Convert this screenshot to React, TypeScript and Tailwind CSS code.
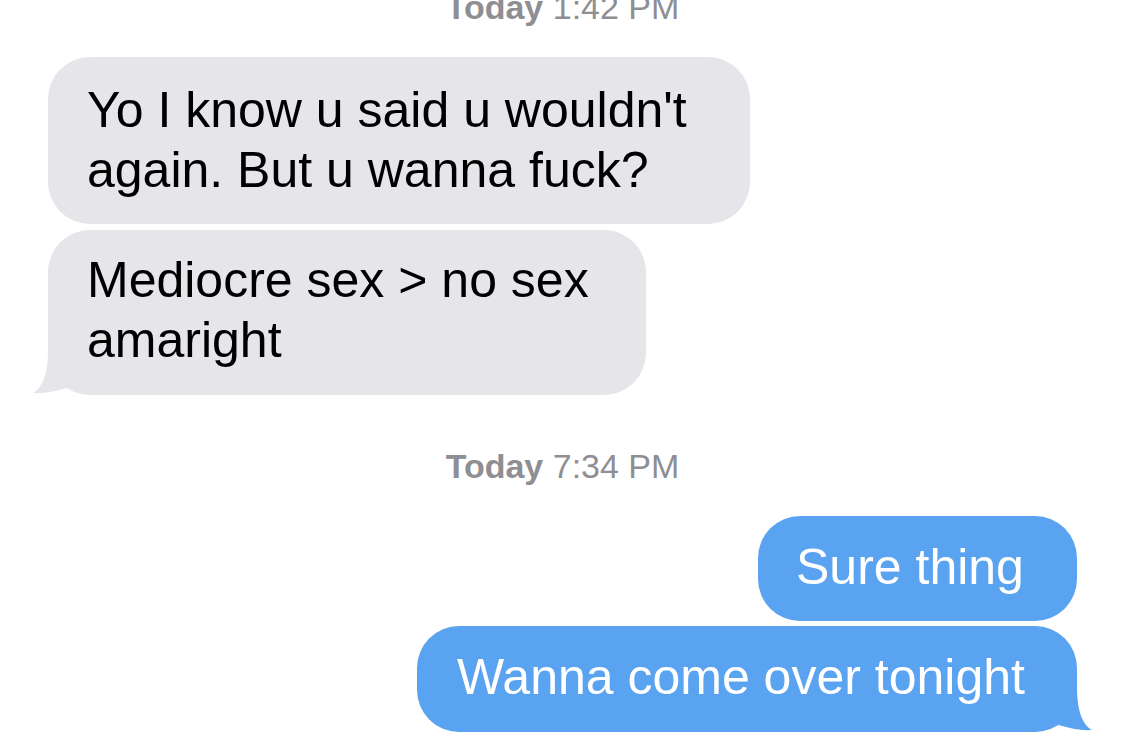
const font = { fontFamily: '"Liberation Sans", Arial, sans-serif' };

function Stamp({ time, className }: { time: string; className: string }) {
  return (
    <div className={`flex h-[40px] justify-center text-[34px] leading-[40px] text-[#8e8e93] ${className}`}>
      <span>
        <span className="font-semibold">Today</span> {time}
      </span>
    </div>
  );
}

function TailLeft() {
  return (
    <svg className="absolute bottom-0 left-[-16px] h-[45px] w-[60px]" viewBox="0 0 60 45">
      <path d="M16 0 C16 25 10 38 1 43 C14 44 28 40 38 37 L60 37 L60 0 Z" fill="#e5e5ea" />
    </svg>
  );
}

function TailRight() {
  return (
    <svg className="absolute bottom-0 right-[-16px] h-[45px] w-[60px]" viewBox="0 0 60 45">
      <path d="M44 0 C44 25 50 38 59 43 C46 44 32 40 22 37 L0 37 L0 0 Z" fill="#5aa3f0" />
    </svg>
  );
}

export default function App() {
  return (
    <div className="h-[751px] w-full overflow-hidden bg-white" style={font}>
      <div className="flex flex-col px-[48px] text-[50px] leading-[60px]">
        <Stamp time="1:42 PM" className="mt-[-13px]" />

        <div className="mt-[30px] h-[167px] w-[702px] rounded-[42px] bg-[#e5e5ea] pl-[39px] pt-[23px] text-black">
          <p>Yo I know u said u wouldn't</p>
          <p>again. But u wanna fuck?</p>
        </div>

        <div className="relative mt-[6px] h-[165px] w-[598px] rounded-[42px] bg-[#e5e5ea] pl-[39px] pt-[20px] text-black">
          <TailLeft />
          <p className="relative">Mediocre sex &gt; no sex</p>
          <p className="relative">amaright</p>
        </div>

        <Stamp time="7:34 PM" className="mt-[51px]" />

        <div className="mt-[30px] h-[105px] w-[319px] self-end rounded-[42px] bg-[#5aa3f0] pl-[38px] pt-[21px] text-white">
          <p>Sure thing</p>
        </div>

        <div className="relative mt-[5px] h-[106px] w-[660px] self-end rounded-[42px] bg-[#5aa3f0] pl-[40px] pt-[21px] text-white">
          <TailRight />
          <p className="relative">Wanna come over tonight</p>
        </div>
      </div>
    </div>
  );
}
